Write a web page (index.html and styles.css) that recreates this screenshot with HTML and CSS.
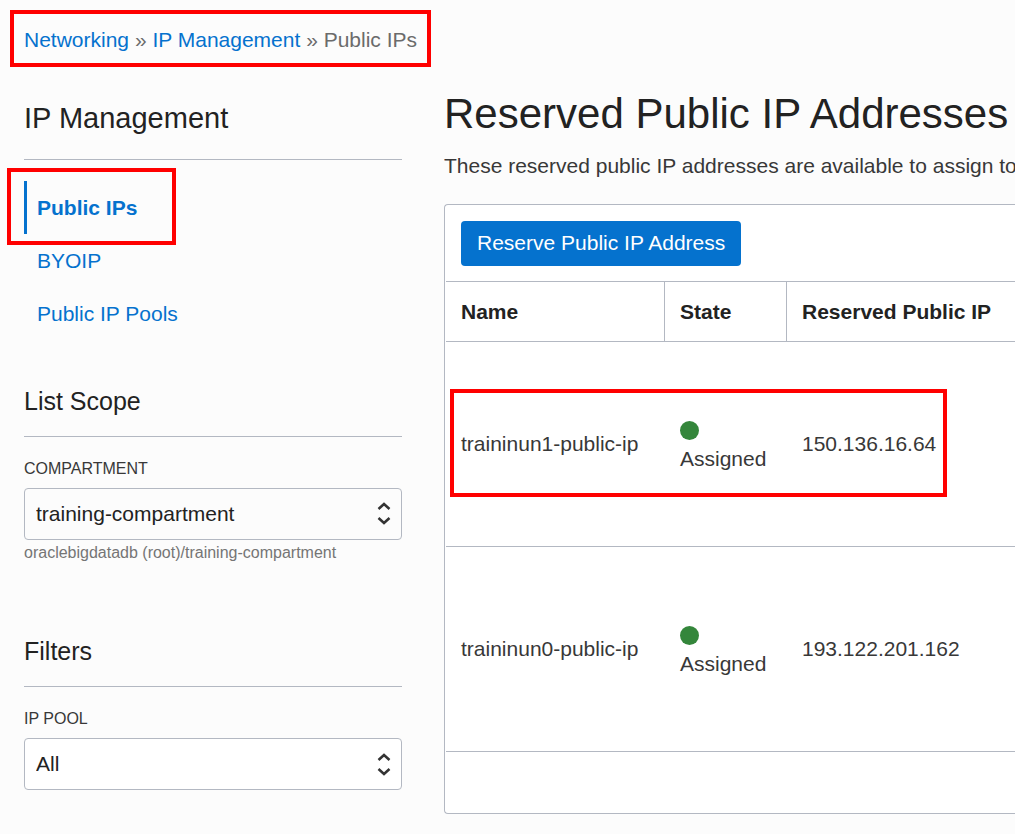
FILE: index.html
```html
<!DOCTYPE html>
<html lang="en">
<head>
<meta charset="utf-8">
<meta name="viewport" content="width=device-width, initial-scale=1">
<title>Reserved Public IP Addresses</title>
<link rel="stylesheet" href="styles.css">
</head>
<body>
<nav class="breadcrumb" aria-label="Breadcrumb">
  <a href="#">Networking</a> <span>»</span> <a href="#">IP Management</a> <span>»</span> <span>Public IPs</span>
</nav>
<div class="layout">
  <aside class="sidebar">
    <h2 class="sidebar-title">IP Management</h2>
    <nav class="side-nav" aria-label="IP Management">
      <a class="side-link active" href="#">Public IPs</a>
      <a class="side-link" href="#">BYOIP</a>
      <a class="side-link" href="#">Public IP Pools</a>
    </nav>
    <section class="scope">
      <h3 class="section-title">List Scope</h3>
      <label class="label" for="compartment">COMPARTMENT</label>
      <div class="select-wrap">
        <select class="select muted" id="compartment"><option>training-compartment</option></select>
        <svg class="arrows" viewBox="0 0 14 24" aria-hidden="true"><path d="M1.5 7 7 2l5.500 5M1.500 16 7 21l5.500-5"/></svg>
      </div>
      <p class="hint">oraclebigdatadb (root)/training-compartment</p>
    </section>
    <section class="filters">
      <h3 class="section-title">Filters</h3>
      <label class="label" for="pool">IP POOL</label>
      <div class="select-wrap">
        <select class="select" id="pool"><option>All</option></select>
        <svg class="arrows" viewBox="0 0 14 24" aria-hidden="true"><path d="M1.500 8 7 3l5.500 5M1.500 17 7 22l5.500-5"/></svg>
      </div>
    </section>
  </aside>
  <main class="main">
    <h1 class="title">Reserved Public IP Addresses</h1>
    <p class="description">These reserved public IP addresses are available to assign to</p>
    <div class="panel">
      <div class="toolbar"><button class="primary" type="button">Reserve Public IP Address</button></div>
      <table class="table">
        <thead>
          <tr><th class="col-name">Name</th><th class="col-state">State</th><th>Reserved Public IP</th></tr>
        </thead>
        <tbody>
          <tr class="marked">
            <td>traininun1-public-ip</td>
            <td class="state"><span class="dot"></span>Assigned</td>
            <td>150.136.16.64</td>
          </tr>
          <tr>
            <td>traininun0-public-ip</td>
            <td class="state"><span class="dot"></span>Assigned</td>
            <td>193.122.201.162</td>
          </tr>
        </tbody>
      </table>
      <div class="panel-footer"></div>
    </div>
  </main>
</div>
</body>
</html>
```

FILE: styles.css
```css
*,
*::after {
  box-sizing: border-box;
}

body {
  margin: 0;
  padding: 10px 0 20px 10px;
  overflow-x: hidden;
  background: #fcfcfc;
  color: #383838;
  font: 21px/26px "Liberation Sans", Arial, sans-serif;
}

h1, h2, h3, p {
  margin: 0;
  font-weight: 400;
}

a {
  color: #0572ce;
  text-decoration: none;
}

.breadcrumb {
  width: fit-content;
  padding: 13px 10px 10px;
  border: 4px solid #f00;
  color: #6b6b6b;
}

.layout {
  display: flex;
  gap: 42px;
  padding-left: 14px;
}

.sidebar {
  flex: 0 0 378px;
  padding-top: 33px;
}

.sidebar-title {
  padding-bottom: 23px;
  border-bottom: 1px solid #b3b8c2;
  color: #222;
  font-size: 29px;
  line-height: 36px;
}

.side-nav {
  display: flex;
  flex-direction: column;
  margin-top: 21px;
}

.side-link {
  padding: 14px 0 13px 10px;
  border-left: 3px solid transparent;
}

.side-link.active {
  position: relative;
  border-left-color: #0572ce;
  font-weight: 700;
}

.side-link.active::after {
  content: "";
  position: absolute;
  top: -13px;
  bottom: -11px;
  left: -20px;
  width: 169px;
  border: 4px solid #f00;
  pointer-events: none;
}

.scope {
  margin-top: 46px;
}

.filters {
  margin-top: 73px;
}

.section-title {
  padding-bottom: 20px;
  border-bottom: 1px solid #b3b8c2;
  color: #222;
  font-size: 25px;
  line-height: 30px;
}

.label {
  display: block;
  margin: 22px 0 9px;
  font-size: 16px;
  line-height: 20px;
}

.select-wrap {
  position: relative;
}

.select {
  display: block;
  width: 100%;
  height: 52px;
  padding: 0 40px 0 11px;
  appearance: none;
  border: 1px solid #b3b8c2;
  border-radius: 4px;
  background: #fff;
  color: #222;
  font: inherit;
}

.select.muted {
  background: #fcfcfc;
}

.arrows {
  position: absolute;
  top: 14px;
  right: 11px;
  width: 14px;
  height: 24px;
  fill: none;
  stroke: #333;
  stroke-width: 2.5;
  pointer-events: none;
}

.hint {
  margin-top: 3px;
  color: #757575;
  font-size: 16px;
  line-height: 20px;
}

.main {
  flex: 1;
  min-width: 0;
  padding-top: 22px;
}

.title {
  color: #222;
  font-size: 42px;
  line-height: 50px;
  white-space: nowrap;
}

.description {
  margin-top: 14px;
  overflow: hidden;
  white-space: nowrap;
}

.panel {
  margin-top: 25px;
  padding-left: 1px;
  border: 1px solid #b3b8c2;
  border-right: 0;
  border-radius: 4px 0 0 4px;
  background: #fff;
}

.toolbar {
  padding: 16px 15px 15px;
}

.primary {
  display: block;
  height: 45px;
  padding: 0 16px 1px;
  border: 0;
  border-radius: 4px;
  background: #0572ce;
  color: #fff;
  font: inherit;
}

.table {
  width: 100%;
  border-collapse: separate;
  border-spacing: 0;
  table-layout: fixed;
  border-top: 1px solid #b3b8c2;
}

.table th,
.table td {
  padding: 0 0 0 15px;
  border-bottom: 1px solid #b3b8c2;
  text-align: left;
  white-space: nowrap;
}

.table th {
  height: 60px;
  border-right: 1px solid #b3b8c2;
  color: #222;
}

.table th:last-child {
  border-right: 0;
}

.table td {
  height: 205px;
}

.table .state {
  padding-top: 4px;
}

.col-name {
  width: 219px;
}

.col-state {
  width: 122px;
}

.dot {
  display: block;
  width: 19px;
  height: 19px;
  margin-bottom: 6px;
  border-radius: 50%;
  background: #34863b;
}

.marked td:first-child {
  position: relative;
}

.marked td:first-child::after {
  content: "";
  position: absolute;
  top: 47px;
  left: 4px;
  width: 497px;
  height: 108px;
  border: 4px solid #f00;
  pointer-events: none;
}

.panel-footer {
  height: 61px;
}
```
